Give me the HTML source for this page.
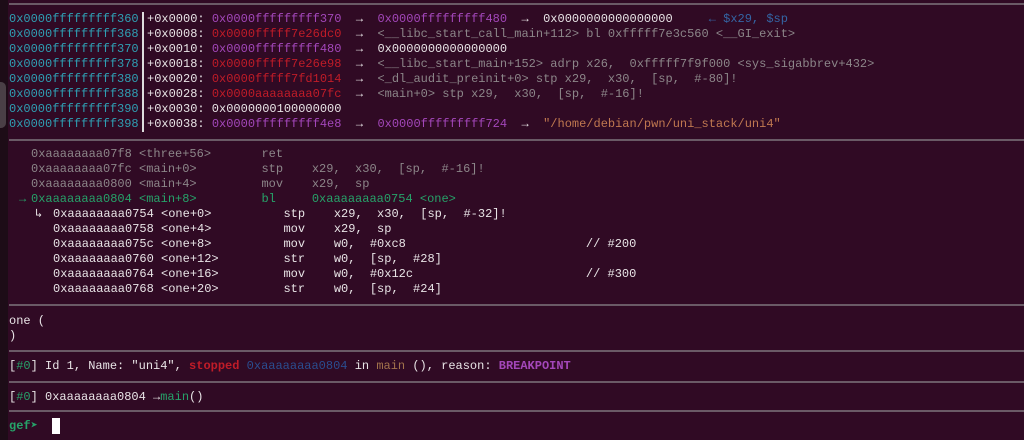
<!DOCTYPE html>
<html><head><meta charset="utf-8"><style>
body{margin:0;width:1024px;height:440px;background:#300a24;overflow:hidden;position:relative;font-family:"Liberation Mono","DejaVu Sans Mono",monospace;font-size:12px;color:#e8e4e6}
.l{position:absolute;white-space:pre;line-height:15px}
.sep{position:absolute;left:9px;right:0;height:2px;background:#6a5a66}
.c{color:#2f9fb3}.p{color:#a347ba}.r{color:#c01c28}.g{color:#8c8689}.gr{color:#26a269}.b{color:#2a4d8f}.br{color:#a2734c}.w{color:#e8e4e6}
#strip{position:absolute;left:0;top:0;width:8px;height:440px;background:#1d0c17}
#knob{position:absolute;left:0;top:82px;width:6px;height:46px;background:#4a3f46;border-radius:0 5px 5px 0}
</style></head><body>
<div id="strip"></div><div id="knob"></div>
<div class="sep" style="top:3px"></div>
<div style="position:absolute;left:142px;top:12px;width:2px;height:120px;background:#ddd"></div>
<div class="l c" style="left:9px;top:12px">0x0000fffffffff360
0x0000fffffffff368
0x0000fffffffff370
0x0000fffffffff378
0x0000fffffffff380
0x0000fffffffff388
0x0000fffffffff390
0x0000fffffffff398</div>
<div class="l" style="left:147px;top:12px">+0x0000: <span class="p">0x0000fffffffff370</span>  →  <span class="p">0x0000fffffffff480</span>  →  0x0000000000000000     <span style="color:#3465a4">← $x29, $sp</span>
+0x0008: <span class="r">0x0000fffff7e26dc0</span>  →  <span class="g">&lt;__libc_start_call_main+112&gt; bl 0xfffff7e3c560 &lt;__GI_exit&gt;</span>
+0x0010: <span class="p">0x0000fffffffff480</span>  →  0x0000000000000000
+0x0018: <span class="r">0x0000fffff7e26e98</span>  →  <span class="g">&lt;__libc_start_main+152&gt; adrp x26,  0xfffff7f9f000 &lt;sys_sigabbrev+432&gt;</span>
+0x0020: <span class="r">0x0000fffff7fd1014</span>  →  <span class="g">&lt;_dl_audit_preinit+0&gt; stp x29,  x30,  [sp,  #-80]!</span>
+0x0028: <span class="r">0x0000aaaaaaaa07fc</span>  →  <span class="g">&lt;main+0&gt; stp x29,  x30,  [sp,  #-16]!</span>
+0x0030: 0x0000000100000000
+0x0038: <span class="p">0x0000fffffffff4e8</span>  →  <span class="p">0x0000fffffffff724</span>  →  <span style="color:#c07850">"/home/debian/pwn/uni_stack/uni4"</span></div>
<div class="sep" style="top:139px"></div>
<div class="l g" style="left:31px;top:147px">0xaaaaaaaa07f8 &lt;three+56&gt;       ret
0xaaaaaaaa07fc &lt;main+0&gt;         stp    x29,  x30,  [sp,  #-16]!
0xaaaaaaaa0800 &lt;main+4&gt;         mov    x29,  sp</div>
<div class="l gr" style="left:19px;top:192px">→</div>
<div class="l gr" style="left:31px;top:192px">0xaaaaaaaa0804 &lt;main+8&gt;         bl     0xaaaaaaaa0754 &lt;one&gt;</div>
<div class="l" style="left:35px;top:207px">↳</div>
<div class="l" style="left:53px;top:207px">0xaaaaaaaa0754 &lt;one+0&gt;          stp    x29,  x30,  [sp,  #-32]!
0xaaaaaaaa0758 &lt;one+4&gt;          mov    x29,  sp
0xaaaaaaaa075c &lt;one+8&gt;          mov    w0,  #0xc8                         // #200
0xaaaaaaaa0760 &lt;one+12&gt;         str    w0,  [sp,  #28]
0xaaaaaaaa0764 &lt;one+16&gt;         mov    w0,  #0x12c                        // #300
0xaaaaaaaa0768 &lt;one+20&gt;         str    w0,  [sp,  #24]</div>
<div class="sep" style="top:304px"></div>
<div class="l" style="left:9px;top:314px">one (
)</div>
<div class="sep" style="top:350px"></div>
<div class="l" style="left:9px;top:359px">[<span class="gr">#0</span>] Id 1, Name: "uni4", <span class="r" style="font-weight:bold">stopped</span> <span class="b">0xaaaaaaaa0804</span> in <span class="br">main</span> (), reason: <span class="p" style="font-weight:bold">BREAKPOINT</span></div>
<div class="sep" style="top:381px"></div>
<div class="l" style="left:9px;top:390px">[<span class="gr">#0</span>] 0xaaaaaaaa0804 →<span class="gr">main</span>()</div>
<div class="sep" style="top:410px"></div>
<div class="l gr" style="left:9px;top:419px;font-weight:bold">gef➤</div>
<div style="position:absolute;left:52px;top:418px;width:8px;height:16px;background:#fff"></div>
</body></html>
